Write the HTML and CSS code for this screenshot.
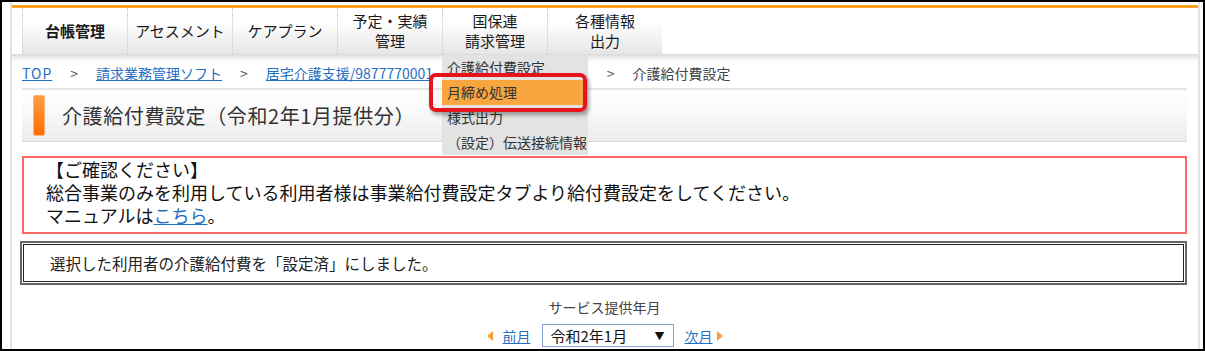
FILE: index.html
```html
<!DOCTYPE html>
<html lang="ja">
<head>
  <meta charset="UTF-8" />
  <title>介護給付費設定</title>
  <link rel="stylesheet" href="styles.css">
</head>
<body>
  <div class="frame">
    <div class="page">
      <div class="topline"></div>

      <nav class="gnav">
        <a class="gnav-item current">台帳管理</a>
        <a class="gnav-item">アセスメント</a>
        <a class="gnav-item">ケアプラン</a>
        <a class="gnav-item">予定・実績<br>管理</a>
        <a class="gnav-item">国保連<br>請求管理</a>
        <a class="gnav-item wide">各種情報<br>出力</a>
      </nav>
      <div class="nav-shadow"></div>

      <div class="content">
        <div class="crumbs">
          <a href="#" class="top">TOP</a><span class="sep">&gt;</span><a href="#">請求業務管理ソフト</a><span class="sep">&gt;</span><a href="#">居宅介護支援/9877770001</a><span class="sep">&gt;</span><span>国保連・請求管理</span><span class="sep">&gt;</span><span class="here">介護給付費設定</span>
        </div>

        <div class="title-box">
          <span class="title-bar"></span>
          <h1>介護給付費設定（令和2年1月提供分）</h1>
        </div>

        <div class="notice">
          <p>【ご確認ください】</p>
          <p>総合事業のみを利用している利用者様は事業給付費設定タブより給付費設定をしてください。</p>
          <p>マニュアルは<a href="#">こちら</a>。</p>
        </div>

        <div class="result">選択した利用者の介護給付費を「設定済」にしました。</div>

        <div class="period">
          <div class="period-label">サービス提供年月</div>
          <div class="period-nav">
            <span class="arrow-left"></span>
            <a href="#" class="prev">前月</a>
            <div class="month-select"><span>令和2年1月</span><span class="caret">▼</span></div>
            <a href="#" class="next">次月</a>
            <span class="arrow-right"></span>
          </div>
        </div>
      </div>
    </div>

    <!-- dropdown of 国保連請求管理 -->
    <ul class="submenu">
      <li>介護給付費設定</li>
      <li class="active">月締め処理</li>
      <li>様式出力</li>
      <li>（設定）伝送接続情報</li>
    </ul>
    <div class="callout"></div>
  </div>
</body>
</html>
```

FILE: styles.css
```css
* {
  box-sizing: border-box;
}

body {
  margin: 0;
  font-family: "Noto Sans CJK JP", "Noto Sans", sans-serif;
  color: #333;
  background: #fff;
}

a {
  color: #1f6fc5;
}

p {
  margin: 0;
}

.frame {
  position: relative;
  width: 1205px;
  height: 351px;
  border: 2px solid #000;
  overflow: hidden;
}

.page {
  margin-left: 8px;
  width: 1190px;
  height: 100%;
  padding-top: 3px;
  border-left: 2px solid #e2e2e2;
  border-right: 2px solid #e2e2e2;
}

.topline {
  height: 3px;
  background: linear-gradient(#ffb54d, #ff9000, #ffb54d);
}

/* global nav */
.gnav {
  display: flex;
  height: 46px;
  padding-left: 10px;
}

.gnav-item {
  width: 105px;
  display: flex;
  align-items: center;
  justify-content: center;
  text-align: center;
  font-size: 15px;
  line-height: 20px;
  color: #1a1a1a;
  border-left: 1px dotted #c4c4c4;
  background: linear-gradient(#fff 30%, #e6e6e6);
}

.gnav-item.current {
  font-weight: bold;
}

.gnav-item.wide {
  width: 115px;
}

.nav-shadow {
  height: 8px;
  background: linear-gradient(#d9d9d9, #f4f4f4 60%, #fff);
}

.content {
  padding: 0 11px 0 10px;
}

/* breadcrumb */
.crumbs {
  font-size: 14px;
  line-height: 20px;
  padding: 1px 0 5px;
  border-bottom: 2px solid #e6e6e6;
  color: #555;
  white-space: nowrap;
}

.crumbs .top {
  letter-spacing: 1px;
}

.crumbs .sep {
  margin: 0 18px;
}

.crumbs .here {
  color: #444;
}

/* page title */
.title-box {
  display: flex;
  align-items: center;
  height: 52px;
  background: linear-gradient(#fff, #fafafa 40%, #ebebeb);
  border-bottom: 1px solid #dedede;
}

.title-bar {
  width: 12px;
  height: 41px;
  margin: 0 17px 0 11px;
  border: 1px solid #ffb778;
  border-radius: 2px;
  background: linear-gradient(#ff9d45, #ff6c00);
}

.title-box h1 {
  margin: 0;
  font-size: 20px;
  font-weight: normal;
  letter-spacing: 0.6px;
  color: #333;
}

/* notice */
.notice {
  margin-top: 14px;
  padding: 0 0 5px 22px;
  border: 2px solid #f66;
  font-size: 18px;
  line-height: 23px;
  color: #111;
}

.result {
  display: flex;
  align-items: center;
  height: 44px;
  margin: 7px 0 0 -2px;
  padding-left: 28px;
  border: 2px solid #666;
  box-shadow: inset 0 0 0 1px #fff, inset 0 0 0 2px #222;
  font-size: 15.5px;
  color: #222;
}

/* month switcher */
.period {
  margin-top: 12px;
  text-align: center;
}

.period-label {
  font-size: 14px;
  line-height: 20px;
  color: #444;
}

.period-nav {
  display: flex;
  justify-content: center;
  align-items: center;
  height: 23px;
  margin-top: 7px;
  font-size: 14px;
}

.arrow-left {
  border-right: 6px solid #f7a030;
  border-top: 5px solid transparent;
  border-bottom: 5px solid transparent;
  margin-right: 10px;
}

.arrow-right {
  border-left: 6px solid #f7a030;
  border-top: 5px solid transparent;
  border-bottom: 5px solid transparent;
  margin-left: 4px;
}

.month-select {
  display: flex;
  justify-content: space-between;
  align-items: center;
  width: 132px;
  height: 23px;
  margin: 0 11px;
  padding: 0 8px;
  border: 1px solid #7f9fd0;
  font-size: 15px;
  color: #111;
}

.month-select .caret {
  font-size: 10px;
}

/* dropdown */
.submenu {
  position: absolute;
  left: 440px;
  top: 53px;
  width: 146px;
  margin: 0;
  padding: 0;
  list-style: none;
  background: #e3e3e3;
}

.submenu li {
  height: 25px;
  line-height: 25px;
  padding-left: 5px;
  font-size: 14px;
  color: #333;
  white-space: nowrap;
}

.submenu li.active {
  background: #f9a540;
  margin-right: 3px;
}

.callout {
  position: absolute;
  left: 427px;
  top: 71px;
  width: 158px;
  height: 39px;
  border: 4px solid #e5151b;
  border-radius: 7px;
  box-shadow: 2px 3px 4px rgba(0, 0, 0, 0.35);
}
```
